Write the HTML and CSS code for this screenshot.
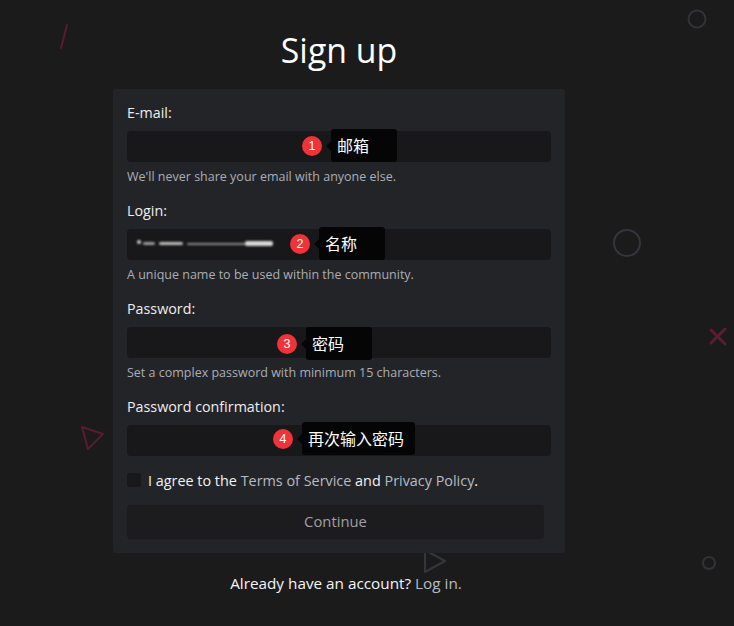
FILE: index.html
```html
<!DOCTYPE html>
<html lang="en">
<head>
<meta charset="utf-8">
<title>Sign up</title>
<link rel="stylesheet" href="styles.css">
</head>
<body>
<svg class="decor" width="734" height="626" viewBox="0 0 734 626" aria-hidden="true">
  <line x1="67" y1="25" x2="61" y2="48" stroke="#5a1c2c" stroke-width="2" stroke-linecap="round"/>
  <circle cx="697" cy="19" r="8.5" fill="none" stroke="#303338" stroke-width="2"/>
  <circle cx="627" cy="243" r="13" fill="none" stroke="#33363c" stroke-width="2"/>
  <g stroke="#5c1d2f" stroke-width="3" stroke-linecap="round">
    <line x1="711" y1="343" x2="725" y2="329"/>
    <line x1="711" y1="330" x2="725" y2="344"/>
  </g>
  <polygon points="82,427 103,434 88,449" fill="none" stroke="#5a1c2c" stroke-width="2" stroke-linejoin="round"/>
  <polygon points="425,550 445,561 425,572" fill="none" stroke="#33363c" stroke-width="2" stroke-linejoin="round"/>
  <circle cx="709" cy="563" r="6" fill="none" stroke="#303338" stroke-width="2"/>
</svg>

<main class="page">
  <h1 class="title">Sign up</h1>
  <form class="card">
    <div class="field">
      <label class="label">E-mail:</label>
      <div class="input-wrap">
        <div class="input"></div>
        <div class="note note-1"><span class="badge">1</span><span class="tip">邮箱</span></div>
      </div>
      <p class="help">We'll never share your email with anyone else.</p>
    </div>

    <div class="field">
      <label class="label">Login:</label>
      <div class="input-wrap">
        <div class="input"><span class="blurred"><i class="b1"></i><i class="b2"></i><i class="b3"></i><i class="b4"></i><i class="b5"></i></span></div>
        <div class="note note-2"><span class="badge">2</span><span class="tip">名称</span></div>
      </div>
      <p class="help">A unique name to be used within the community.</p>
    </div>

    <div class="field">
      <label class="label">Password:</label>
      <div class="input-wrap">
        <div class="input"></div>
        <div class="note note-3"><span class="badge">3</span><span class="tip">密码</span></div>
      </div>
      <p class="help">Set a complex password with minimum 15 characters.</p>
    </div>

    <div class="field field-last">
      <label class="label">Password confirmation:</label>
      <div class="input-wrap">
        <div class="input"></div>
        <div class="note note-4"><span class="badge">4</span><span class="tip">再次输入密码</span></div>
      </div>
    </div>

    <div class="agree">
      <span class="checkbox"></span>
      <span>I agree to the <a class="link">Terms of Service</a> and <a class="link">Privacy Policy</a>.</span>
    </div>

    <div class="button">Continue</div>
  </form>
  <p class="footer">Already have an account? <a class="link">Log in.</a></p>
</main>
</body>
</html>
```

FILE: styles.css
```css
* { box-sizing: border-box; }

html, body {
  margin: 0;
  padding: 0;
}

body {
  width: 734px;
  height: 626px;
  overflow: hidden;
  background: #1b1b1c;
  color: #eeeeee;
  font-family: "Open Sans", "Noto Sans", "Liberation Sans", sans-serif;
  position: relative;
}

.decor {
  position: absolute;
  left: 0;
  top: 0;
}

.page {
  position: relative;
  width: 678px;
  display: flex;
  flex-direction: column;
  align-items: center;
}

.title {
  margin: 30px 0 19px;
  font-size: 33.8px;
  line-height: 40px;
  font-weight: 400;
  color: #ffffff;
}

.card {
  width: 452px;
  background: #232428;
  border-radius: 3px;
  padding: 14px 14px 14px;
  display: flex;
  flex-direction: column;
}

.field {
  display: flex;
  flex-direction: column;
  margin-bottom: 15px;
}

.label {
  font-size: 14.3px;
  line-height: 20px;
  color: #eeeeee;
  margin-bottom: 8px;
}

.input-wrap {
  position: relative;
}

.input {
  height: 31px;
  background: #18181a;
  border-radius: 4px;
  position: relative;
}

.help {
  margin: 6px 0 0;
  font-size: 12.5px;
  line-height: 18px;
  color: #aaaeb5;
}

.field-last {
  margin-bottom: 14px;
}

.blurred {
  position: absolute;
  left: 10px;
  top: 10px;
  width: 140px;
  height: 10px;
  filter: blur(0.8px);
}
.blurred i {
  position: absolute;
  display: block;
  background: #d9d9d9;
  border-radius: 2px;
}
.blurred .b1 { left: 0; top: 1px; width: 4px; height: 4px; background: #cfcfcf; }
.blurred .b2 { left: 6px; top: 3px; width: 12px; height: 3px; background: #9a9a9a; }
.blurred .b3 { left: 22px; top: 3px; width: 24px; height: 3px; background: #bdbdbd; }
.blurred .b4 { left: 50px; top: 4px; width: 62px; height: 2px; background: #8a8a8a; }
.blurred .b5 { left: 108px; top: 2px; width: 28px; height: 5px; background: #d8d8d8; }

.note {
  position: absolute;
  display: flex;
  align-items: center;
}
.note-1 { left: 175px; top: -2px; }
.note-2 { left: 163px; top: -2px; }
.note-3 { left: 150px; top: 0; }
.note-4 { left: 146px; top: -3px; }

.badge {
  width: 20px;
  height: 20px;
  border-radius: 50%;
  background: #ee3339;
  color: #ffffff;
  font-size: 12.5px;
  font-family: "Liberation Sans", sans-serif;
  display: flex;
  align-items: center;
  justify-content: center;
  margin-right: 9px;
  margin-top: 1px;
}

.tip {
  position: relative;
  height: 33px;
  min-width: 66px;
  padding: 0 11px 0 6px;
  background: #050505;
  border-radius: 3px;
  color: #ffffff;
  font-family: "Noto Sans CJK SC", sans-serif;
  font-size: 16px;
  line-height: 33px;
}
.tip::before {
  content: "";
  position: absolute;
  left: -5px;
  top: 12px;
  border-top: 5px solid transparent;
  border-bottom: 5px solid transparent;
  border-right: 5px solid #050505;
}

.agree {
  display: flex;
  align-items: center;
  height: 20px;
  font-size: 14.4px;
  color: #f2f2f2;
}

.checkbox {
  width: 14px;
  height: 14px;
  border-radius: 3px;
  background: #18181a;
  margin-right: 7px;
}

.link {
  color: #b7bbc3;
  text-decoration: none;
}

.button {
  margin-top: 15px;
  margin-right: 7px;
  height: 34px;
  background: #1c1c1f;
  border-radius: 4px;
  display: flex;
  align-items: center;
  justify-content: center;
  color: #a0a0a0;
  font-size: 14.8px;
  padding-bottom: 2px;
}

.footer {
  margin: 20px 0 0;
  padding-left: 14px;
  font-size: 15.3px;
  line-height: 20px;
  color: #f5f5f5;
}
```
